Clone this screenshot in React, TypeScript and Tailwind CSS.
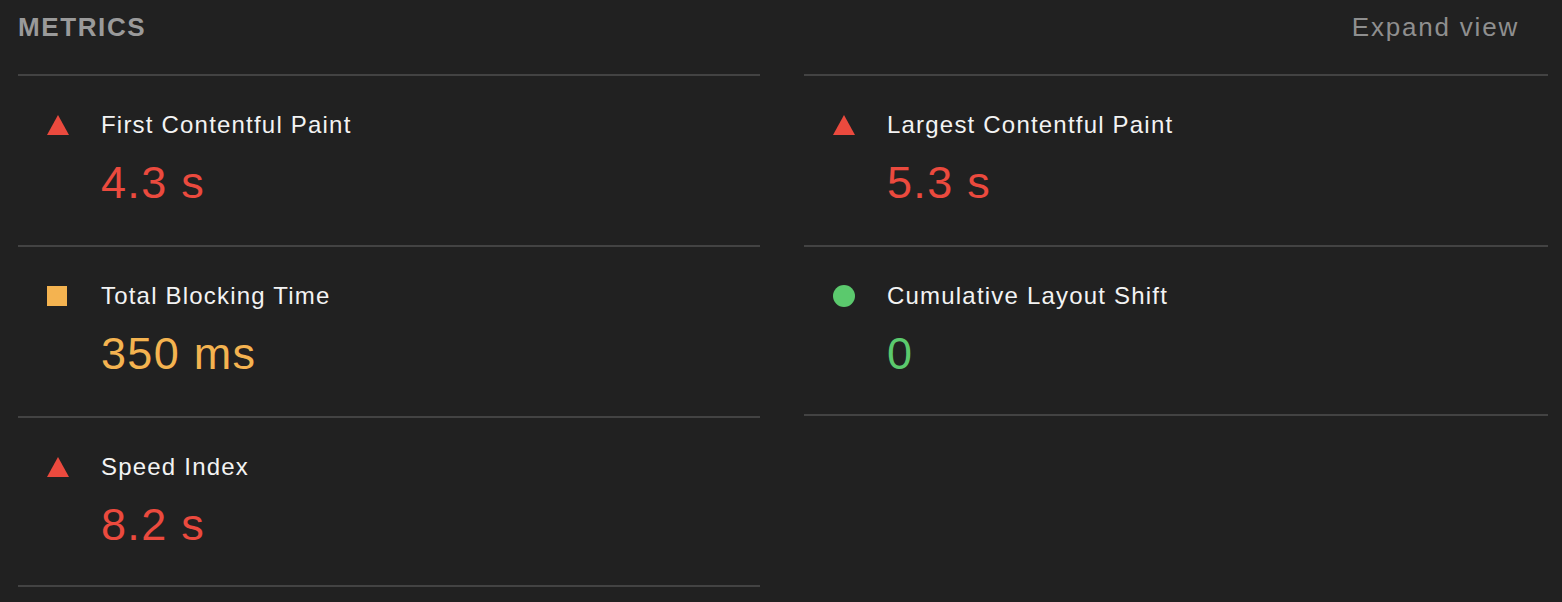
import React from 'react';

type Rating = 'fail' | 'average' | 'pass';

interface Metric {
    id: string;
    title: string;
    value: string;
    rating: Rating;
}

const leftMetrics: Metric[] = [
    { id: 'fcp', title: 'First Contentful Paint', value: '4.3 s', rating: 'fail' },
    { id: 'tbt', title: 'Total Blocking Time', value: '350 ms', rating: 'average' },
    { id: 'si', title: 'Speed Index', value: '8.2 s', rating: 'fail' },
];

const rightMetrics: Metric[] = [
    { id: 'lcp', title: 'Largest Contentful Paint', value: '5.3 s', rating: 'fail' },
    { id: 'cls', title: 'Cumulative Layout Shift', value: '0', rating: 'pass' },
];

const valueColor: Record<Rating, string> = {
    fail: 'text-[#eb4a3e]',
    average: 'text-[#f4b350]',
    pass: 'text-[#5bc96d]',
};

const RatingIcon: React.FC<{ rating: Rating }> = ({ rating }) => {
    if (rating === 'fail') {
        return (
            <svg width="22" height="20" viewBox="0 0 22 20" className="block">
                <polygon points="11,0 22,20 0,20" fill="#eb4a3e" />
            </svg>
        );
    }
    if (rating === 'average') {
        return <div className="w-[20px] h-[20px] bg-[#f4b350]" />;
    }
    return <div className="w-[22px] h-[22px] rounded-full bg-[#5bc96d]" />;
};

const MetricRow: React.FC<{ metric: Metric; last?: boolean }> = ({ metric, last }) => (
    <div className={`flex items-start h-[171px] pt-[35px] border-t-2 border-[#434343] ${last ? 'border-b-2' : ''}`}>
        <div className="w-[83px] pl-[29px] h-[28px] flex items-center shrink-0">
            <RatingIcon rating={metric.rating} />
        </div>
        <div className="flex flex-col">
            <span className="text-[24px] leading-[28px] tracking-[1.2px] text-[#f3f3f3]">{metric.title}</span>
            <span className={`mt-[18px] text-[45px] leading-[52px] tracking-[1.3px] ${valueColor[metric.rating]}`}>
                {metric.value}
            </span>
        </div>
    </div>
);

export default function App() {
    return (
        <div
            className="w-[1562px] h-[602px] overflow-hidden bg-[#212121] pl-[18px] pr-[14px]"
            style={{ fontFamily: '"Liberation Sans", Arial, sans-serif' }}
        >
            {/* Header */}
            <div className="flex items-start justify-between pt-[11px] pb-[31px] pr-[29px]">
                <span className="text-[26px] leading-[32px] font-bold tracking-[1.6px] text-[#9a9a9a]">METRICS</span>
                <button className="text-[26px] leading-[32px] tracking-[1.8px] text-[#8f8f8f]">Expand view</button>
            </div>

            {/* Metric columns */}
            <div className="grid grid-cols-[742px_744px] gap-x-[44px] items-start">
                <div className="flex flex-col">
                    {leftMetrics.map((m, i) => (
                        <MetricRow key={m.id} metric={m} last={i === leftMetrics.length - 1} />
                    ))}
                </div>
                <div className="flex flex-col">
                    {rightMetrics.map((m, i) => (
                        <MetricRow key={m.id} metric={m} last={i === rightMetrics.length - 1} />
                    ))}
                </div>
            </div>
        </div>
    );
}
